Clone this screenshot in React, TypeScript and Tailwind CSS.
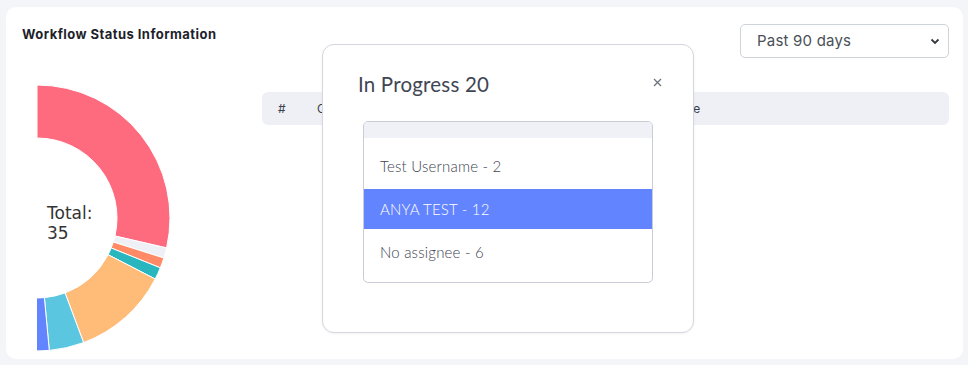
import React from 'react';

const SEGMENTS = [
  { from: 0, to: 103, color: '#ff6b7e' },
  { from: 103, to: 107.5, color: '#eef0f5' },
  { from: 107.5, to: 112, color: '#ff8a65' },
  { from: 112, to: 117.3, color: '#2ab6be' },
  { from: 117.3, to: 159.5, color: '#ffbb78' },
  { from: 159.5, to: 174.7, color: '#5bc6df' },
  { from: 174.7, to: 200, color: '#6384ff' },
];

const ROWS = [
  { label: 'Test Username - 2', active: false, h: 'h-[51px] pt-[6px]' },
  { label: 'ANYA TEST - 12', active: true, h: 'h-[40px]' },
  { label: 'No assignee - 6', active: false, h: 'h-[47px]' },
];

function arc(cx: number, cy: number, r0: number, r1: number, a0: number, a1: number) {
  const p = (r: number, a: number) => {
    const t = (a * Math.PI) / 180;
    return `${(cx + r * Math.sin(t)).toFixed(2)} ${(cy - r * Math.cos(t)).toFixed(2)}`;
  };
  const large = a1 - a0 > 180 ? 1 : 0;
  return `M ${p(r1, a0)} A ${r1} ${r1} 0 ${large} 1 ${p(r1, a1)} L ${p(r0, a1)} A ${r0} ${r0} 0 ${large} 0 ${p(r0, a0)} Z`;
}

function Donut() {
  return (
    <div className="relative ml-[15px] mt-[42px] h-[270px] w-[140px] overflow-hidden">
      <svg width="140" height="270" viewBox="0 0 140 270">
        {SEGMENTS.map((s) => (
          <path key={s.from} d={arc(0, 135, 80, 133, s.from, s.to)} fill={s.color} stroke="#fff" strokeWidth="1" />
        ))}
      </svg>
      <div className="absolute left-[10px] top-[120px] text-[17px] font-normal leading-[20px] text-[#333] font-['DejaVu_Sans',sans-serif]">
        Total:
        <br />
        35
      </div>
    </div>
  );
}

export default function App() {
  return (
    <div className="min-h-[365px] bg-[#f4f5f9] pl-[6px] pr-[5px] pt-[7px] pb-[6px] font-['Inter',sans-serif]">
      <div className="relative flex h-[352px] rounded-[10px] bg-white pl-[16px] pr-[14px] pt-[20px]">
        {/* left: chart */}
        <div className="w-[240px] shrink-0">
          <h3 className="text-[13px] font-bold leading-[14px] tracking-[0.45px] text-[#1e1f2b]">
            Workflow Status Information
          </h3>
          <Donut />
        </div>

        {/* right: filter + table */}
        <div className="flex flex-1 flex-col">
          <div className="-mt-[3px] flex justify-end">
            <div className="flex h-[34px] w-[209px] items-center justify-between rounded-[5px] border border-[#ced4da] bg-white pl-[16px] pr-[8px] text-[15px] tracking-[0.2px] text-[#495057]">
              <span>Past 90 days</span>
              <svg width="10" height="10" viewBox="0 0 10 10">
                <path d="M1.5 3.5 L5 7 L8.5 3.5" fill="none" stroke="#343a40" strokeWidth="1.8" />
              </svg>
            </div>
          </div>
          <div className="mt-[34px] flex h-[33px] items-center rounded-[6px] bg-[#eef0f5] text-[12px] text-[#3b3f4a]">
            <span className="w-[55px] pl-[16px]">#</span>
            <span className="w-[357px]">Case</span>
            <span>Date</span>
          </div>
        </div>

        {/* modal */}
        <div className="absolute left-[316px] top-[37px] h-[289px] w-[372px] rounded-[12px] border border-[#d5d6de] bg-white shadow-[0_1px_3px_rgba(0,0,0,0.05)] font-['Lato',sans-serif]">
          <div className="flex items-start justify-between pl-[35px] pr-[31px] pt-[27px]">
            <h2 className="text-[20.5px] leading-[24px] tracking-[0.2px] text-[#3f4654]">In Progress 20</h2>
            <svg className="mt-[6px]" width="9" height="9" viewBox="0 0 9 9">
              <path d="M1 1 L8 8 M8 1 L1 8" stroke="#6c757d" strokeWidth="1.3" />
            </svg>
          </div>
          <div className="mx-[40px] mt-[25px] overflow-hidden rounded-[5px] border border-[#c9ccd6]">
            <div className="h-[16px] bg-[#f0f1f6]" />
            {ROWS.map((r) => (
              <div
                key={r.label}
                className={`flex items-center pl-[16px] text-[15px] tracking-[0.2px] font-light ${r.h} ${
                  r.active ? 'bg-[#6384ff] text-white' : 'text-[#3d4350]'
                }`}
              >
                {r.label}
              </div>
            ))}
            <div className="h-[6px]" />
          </div>
        </div>
      </div>
    </div>
  );
}
